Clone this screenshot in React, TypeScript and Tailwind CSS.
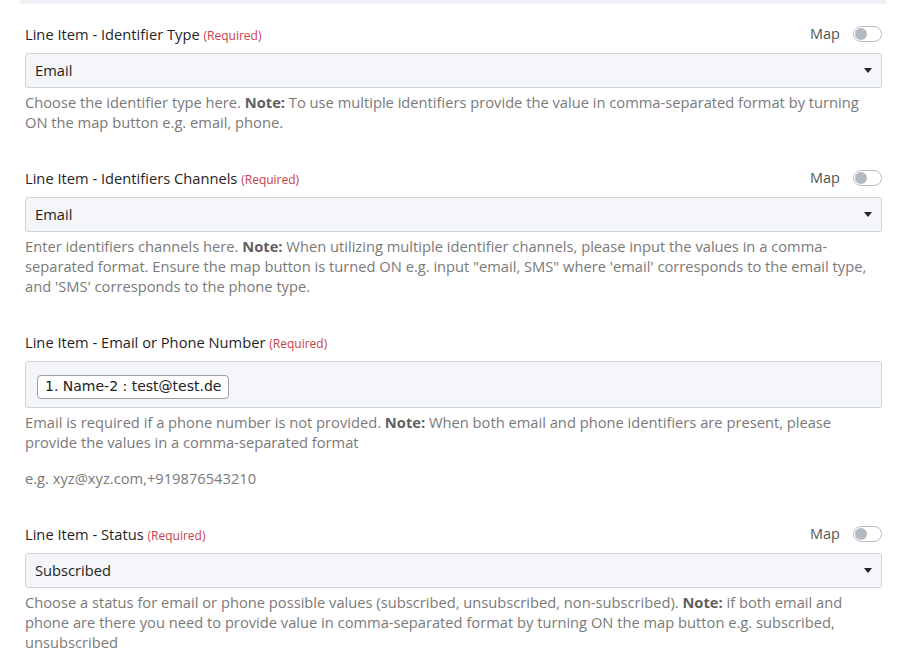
import React from "react";

const font = { fontFamily: "'Open Sans', 'Noto Sans', sans-serif" };

function MapToggle() {
  return (
    <div className="flex items-center gap-[13px]">
      <span className="text-[14.5px] text-[#555]">Map</span>
      <span className="relative inline-block h-[16px] w-[29px] rounded-full border border-[#b8bec6] bg-white">
        <span className="absolute left-[1px] top-[1px] h-[12px] w-[12px] rounded-full bg-[#b3b9c0]" />
      </span>
    </div>
  );
}

function Label({ text, map }: { text: string; map?: boolean }) {
  return (
    <div className="mb-[7px] flex h-[24px] items-center justify-between">
      <div className="text-[14.7px] text-[#1f1f1f]">
        {text} <span className="text-[12px] text-[#c9414b]">(Required)</span>
      </div>
      {map && <MapToggle />}
    </div>
  );
}

function Select({ value }: { value: string }) {
  return (
    <div className="flex h-[35px] items-center justify-between rounded-[3px] border border-[#cfd4da] bg-[#f4f6f9] pl-[9px] pr-[9px]">
      <span className="text-[14.7px] text-[#1f1f1f]">{value}</span>
      <svg width="8" height="5" viewBox="0 0 8 5">
        <path d="M0 0h8L4 5z" fill="#222" />
      </svg>
    </div>
  );
}

function Help({ children }: { children: React.ReactNode }) {
  return <p className="mt-[4px] text-[14.7px] leading-[20px] text-[#7a7a7a]">{children}</p>;
}

export default function App() {
  return (
    <div className="min-h-screen bg-white pr-[15px]" style={font}>
      <div className="ml-[20px] mr-[-5px] h-[4px] bg-[#eef2f6]" />
      <div className="pl-[25px] pt-[18px]">
        <section>
          <Label text="Line Item - Identifier Type" map />
          <Select value="Email" />
          <Help>
            Choose the identifier type here. <b className="text-[#5f5f5f]">Note:</b> To use multiple identifiers provide
            the value in comma-separated format by turning ON the map button e.g. email, phone.
          </Help>
        </section>

        <section className="mt-[34px]">
          <Label text="Line Item - Identifiers Channels" map />
          <Select value="Email" />
          <Help>
            Enter identifiers channels here. <b className="text-[#5f5f5f]">Note:</b> When utilizing multiple identifier
            channels, please input the values in a comma-separated format. Ensure the map button is turned ON e.g. input
            "email, SMS" where 'email' corresponds to the email type, and 'SMS' corresponds to the phone type.
          </Help>
        </section>

        <section className="mt-[34px]">
          <Label text="Line Item - Email or Phone Number" />
          <div className="h-[47px] rounded-[3px] border border-[#cfd4da] bg-[#f4f6f9] pl-[11px] pt-[11px]">
            <span
              className="inline-flex h-[24px] items-center rounded-[4px] border border-[#9aa0a6] bg-white px-[7px] text-[14px] text-[#222]"
              style={{ fontFamily: "'DejaVu Sans', Verdana, sans-serif" }}
            >
              1. Name-2 : test@test.de
            </span>
          </div>
          <Help>
            Email is required if a phone number is not provided. <b className="text-[#5f5f5f]">Note:</b> When both email
            and phone identifiers are present, please provide the values in a comma-separated format
          </Help>
          <p className="mt-[16px] text-[14.7px] leading-[20px] text-[#7a7a7a]">e.g. xyz@xyz.com,+919876543210</p>
        </section>

        <section className="mt-[34px]">
          <Label text="Line Item - Status" map />
          <Select value="Subscribed" />
          <Help>
            Choose a status for email or phone possible values (subscribed, unsubscribed, non-subscribed).{" "}
            <b className="text-[#5f5f5f]">Note:</b> if both email and phone are there you need to provide value in
            comma-separated format by turning ON the map button e.g. subscribed, unsubscribed
          </Help>
        </section>
      </div>
    </div>
  );
}
